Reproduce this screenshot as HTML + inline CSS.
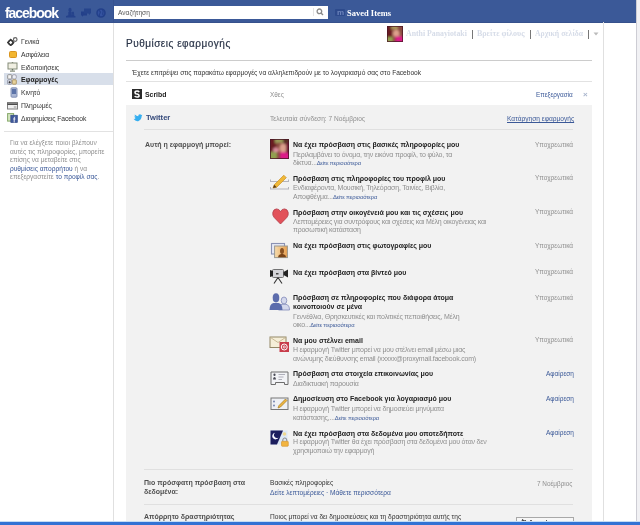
<!DOCTYPE html>
<html><head><meta charset="utf-8">
<style>
*{margin:0;padding:0;box-sizing:border-box}
html,body{width:640px;height:525px;overflow:hidden;background:#fff;font-family:"Liberation Sans",sans-serif;position:relative}
.a{position:absolute;white-space:nowrap;line-height:1;will-change:transform}
.hd{position:absolute;left:0;top:0;width:636px;height:23px;background:#3b5998;border-bottom:1px solid #36518c}
.logo{left:4.5px;top:6px;font-size:14px;font-weight:bold;color:#fff;letter-spacing:-1.05px}
.srch{position:absolute;left:114px;top:6px;width:214px;height:13px;background:#fff}
.d{color:#333}
.g{color:#8f8f8f}
.m{color:#505050}
.b{font-weight:bold}
.l{color:#3b5998}
.sm{font-size:5.85px}
.sep{position:absolute;height:1px;background:#e2e2e2}
svg{position:absolute}
</style></head><body>
<!-- header -->
<div class="hd"></div>
<div class="a logo">facebook</div>
<div class="srch"></div>
<div class="a" style="left:117.7px;top:9.6px;color:#555;font-size:6.6px">Αναζήτηση</div>
<div class="a" style="left:347px;top:9px;font-family:'Liberation Serif',serif;font-weight:bold;font-size:8.5px;color:#fff">Saved Items</div>

<!-- right strip -->
<div style="position:absolute;left:636px;top:0;width:4px;height:525px;background:#f1f1f4;border-left:1px solid #cdcdd4"></div>
<!-- column borders -->
<div style="position:absolute;left:113px;top:23px;width:1px;height:502px;background:#e0e0e0"></div><div style="position:absolute;left:113px;top:0;width:1px;height:23px;background:#36528f"></div>
<div style="position:absolute;left:603px;top:22px;width:1px;height:503px;background:#e0e0e0"></div>

<!-- sidebar -->
<div style="position:absolute;left:4px;top:73px;width:109px;height:12px;background:#d8dfea"></div>
<div class="sep" style="left:4px;top:131px;width:109px"></div>

<!-- title -->
<div class="sep" style="left:126px;top:60px;width:466px;background:#ccc"></div>
<div class="sep" style="left:126px;top:81px;width:466px"></div>

<!-- gray area -->
<div style="position:absolute;left:126px;top:105px;width:466px;height:420px;background:#f2f2f2"></div>
<div class="sep" style="left:144px;top:129px;width:429px;background:#e0e0e0"></div>
<div class="sep" style="left:144px;top:469px;width:429px;background:#e0e0e0"></div>
<div class="sep" style="left:144px;top:504px;width:429px;background:#e0e0e0"></div>


<!-- header icons -->
<svg style="left:65px;top:7px" width="11" height="11" viewBox="0 0 11 11">
 <g fill="#23408a" opacity="0.9">
 <ellipse cx="5" cy="3" rx="1.6" ry="2.2"/><path d="M3.3 5 H6.7 V9 H3.3Z"/>
 <ellipse cx="8" cy="6" rx="1.1" ry="1.5"/><path d="M6.8 7.2 H9.2 V9.5 H6.8Z"/>
 <path d="M1 9 Q3 8 5 8.3 Q8 8 10.5 9.2 V10.5 H1Z"/></g>
</svg>
<svg style="left:80px;top:8px" width="12" height="9" viewBox="0 0 12 9">
 <path d="M1 3.5 h6 v4 h-3.5 l-1.5 1.3 v-1.3 h-1z" fill="#23408a"/><path d="M4 0.5 h7 v5 h-1 v1.5 l-1.5 -1.5 h-4.5z" fill="#26448c"/>
</svg>
<svg style="left:96px;top:8px" width="10" height="10" viewBox="0 0 10 10">
 <circle cx="5" cy="5" r="4" stroke="#23408a" stroke-width="1.6" fill="#3452a0"/><path d="M3 2.5 Q5 3.5 4 5.2 Q2.8 6 3.6 8 M6.5 2 Q7.8 3.5 6.8 5 Q6.4 6.6 7.6 7.6" stroke="#23408a" stroke-width="1.1" fill="none"/>
</svg>
<div style="position:absolute;left:313px;top:8px;width:1px;height:8px;background:#e4e4e4"></div>
<svg style="left:316px;top:8px" width="8" height="8" viewBox="0 0 8 8">
 <circle cx="3.4" cy="3.3" r="2.3" stroke="#8a8a8a" stroke-width="1.3" fill="none"/><path d="M5 5 L7 7" stroke="#8a8a8a" stroke-width="1.5"/>
</svg>
<div style="position:absolute;left:335px;top:8.5px;width:10px;height:7.5px;background:#2d4a8c;border-radius:1px"></div>
<div class="a" style="left:336.5px;top:8.5px;font-size:8px;font-weight:bold;color:#6f86bd;font-family:'Liberation Sans',sans-serif">m</div>


<!-- profile links -->
<div class="a" style="left:406px;top:30px;font-family:'Liberation Serif',serif;font-weight:bold;font-size:7.8px;color:#d6dce8">Anthi Panayiotaki</div>
<div class="a" style="left:476.5px;top:30px;font-family:'Liberation Serif',serif;font-weight:bold;font-size:8.0px;color:#d6dce8">Βρείτε φίλους</div>
<div class="a" style="left:535px;top:30px;font-family:'Liberation Serif',serif;font-weight:bold;font-size:7.7px;color:#d6dce8">Αρχική σελίδα</div>
<div style="position:absolute;left:472px;top:30px;width:1px;height:9px;background:#777"></div>
<div style="position:absolute;left:530px;top:30px;width:1px;height:9px;background:#777"></div>
<div style="position:absolute;left:588px;top:30px;width:1px;height:9px;background:#777"></div>
<svg style="left:593px;top:32px" width="6" height="4" viewBox="0 0 6 4"><path d="M0.5 0.5 H5.5 L3 3.5Z" fill="#bbb"/></svg>

<!-- avatar -->
<svg style="left:387px;top:26px" width="16" height="16" viewBox="0 0 19 19">
 <defs><filter id="bl2" x="-20%" y="-20%" width="140%" height="140%"><feGaussianBlur stdDeviation="1.2"/></filter><clipPath id="cp2"><rect width="19" height="19"/></clipPath></defs>
 <g clip-path="url(#cp2)"><rect width="19" height="19" fill="#8a4a40"/>
 <g filter="url(#bl2)">
 <rect x="-2" y="-2" width="8" height="16" fill="#6a1e22"/>
 <rect x="5" y="-2" width="8" height="6" fill="#aa9a58"/>
 <ellipse cx="11" cy="9" rx="4" ry="4.5" fill="#dca08c"/>
 <rect x="-2" y="13" width="9" height="9" fill="#92a050"/>
 <rect x="10" y="12" width="11" height="9" fill="#dc1c88"/>
 </g></g>
 <rect x="0.5" y="0.5" width="18" height="18" fill="none" stroke="#4a1626" stroke-width="1.2" opacity="0.8"/>
</svg>

<!-- sidebar icons -->
<svg style="left:7px;top:37px" width="12" height="9" viewBox="0 0 12 9">
 <path d="M3.7 2.6 L6.6 5.5 L3.7 8.4 L0.8 5.5Z" fill="none" stroke="#3a3a3a" stroke-width="1.5"/>
 <circle cx="3.7" cy="5.5" r="2.3" fill="none" stroke="#3a3a3a" stroke-width="1.3"/>
 <circle cx="8.2" cy="2.5" r="1.8" fill="none" stroke="#666" stroke-width="1.2"/>
</svg>
<div style="position:absolute;left:8.5px;top:50.5px;width:8px;height:7.5px;background:#f2b630;border:1px solid #d99520;border-radius:1.5px"></div>
<svg style="left:7px;top:62px" width="11" height="10" viewBox="0 0 11 10">
 <rect x="1" y="1" width="9" height="6" fill="#f0efe2" stroke="#838b78" stroke-width="1"/>
 <rect x="4.8" y="0" width="1.4" height="1" fill="#838b78"/>
 <rect x="4.8" y="7" width="1.4" height="1.5" fill="#6a7460"/><rect x="3" y="8.6" width="5" height="1" fill="#6a7460"/>
</svg>
<svg style="left:7px;top:74px" width="10" height="11" viewBox="0 0 10 11">
 <rect x="0.7" y="0.7" width="4" height="4.3" rx="0.6" fill="#f4f4f4" stroke="#8a8a8a" stroke-width="0.9"/>
 <rect x="5.3" y="0.7" width="4" height="4.3" rx="1.5" fill="#eceef4" stroke="#9a9aa8" stroke-width="0.9"/>
 <rect x="0.7" y="5.8" width="4" height="4.4" rx="0.6" fill="#dde0ea" stroke="#8a8fa0" stroke-width="0.9"/>
 <path d="M2.7 7 L4 8.3 L2.7 9.6 L1.4 8.3Z" fill="#333"/>
 <rect x="5.3" y="5.8" width="4" height="4.4" rx="0.6" fill="#e6d29a" stroke="#a89060" stroke-width="0.9"/>
</svg>
<svg style="left:10px;top:87px" width="8" height="11" viewBox="0 0 8 11">
 <rect x="1" y="0.8" width="6" height="9.4" rx="1" fill="#aab6d4" stroke="#7c8ab0" stroke-width="0.9"/>
 <rect x="2" y="2" width="4" height="5" fill="#5c73a8"/>
</svg>
<svg style="left:7px;top:102px" width="11" height="8" viewBox="0 0 11 8">
 <rect x="0.5" y="0.5" width="10" height="6.5" fill="#f0f0f0" stroke="#7e7e7e" stroke-width="1"/>
 <rect x="0.5" y="1.4" width="10" height="1.5" fill="#3a3a3a"/>
 <rect x="6.8" y="4.4" width="2.6" height="1.2" fill="#a0a0a0"/>
</svg>
<svg style="left:7px;top:113px" width="11" height="10" viewBox="0 0 11 10">
 <rect x="0.6" y="0.6" width="6" height="7.5" fill="#d4e6c0" stroke="#86a86a" stroke-width="1"/>
 <rect x="3.8" y="2.2" width="6.6" height="7.4" fill="#40589a" stroke="#2d4480" stroke-width="0.6"/>
 <path d="M8.2 4 Q7.2 4 7.2 5 V9.5 M6.4 6 H8.4" stroke="#fff" stroke-width="0.9" fill="none"/>
</svg>

<!-- content icons -->
<svg style="left:132px;top:89px" width="10" height="10" viewBox="0 0 10 10">
 <rect width="10" height="10" fill="#2a2a2a"/>
 <path d="M7.2 3.2 Q6.6 2.1 5 2.1 Q3 2.1 3 3.7 Q3 5 5 5.1 Q7.1 5.3 7.1 6.7 Q7.1 8.1 5 8.1 Q3.3 8.1 2.7 7" stroke="#fff" stroke-width="1.5" fill="none"/>
</svg>
<svg style="left:133px;top:113.5px" width="9.5" height="8" viewBox="0 0 11 9">
 <path d="M0.5 5.5 Q2 6 3 4.5 Q1.5 4 1.5 2.5 Q2.5 3 3 2.8 Q1.5 1.5 2 0.5 Q4 2.5 6 2.5 Q6 0.3 8 0.3 Q9 0.3 9.6 1 L10.8 0.6 L10 1.8 L10.8 1.7 Q10.2 2.5 10 2.6 Q10 6.5 6 8.2 Q3 9 0.5 5.5Z" fill="#35aef0"/>
</svg>
<div class="a" style="left:583px;top:91px;font-size:8px;color:#a8b4cc;font-weight:bold">×</div>

<!-- permission icons -->
<svg style="left:270px;top:139px" width="19" height="20" viewBox="0 0 19 20">
 <defs><filter id="bl" x="-20%" y="-20%" width="140%" height="140%"><feGaussianBlur stdDeviation="1.1"/></filter><clipPath id="cp"><rect width="19" height="20"/></clipPath></defs>
 <g clip-path="url(#cp)"><rect width="19" height="20" fill="#8a4a40"/>
 <g filter="url(#bl)">
 <rect x="-2" y="-2" width="8" height="16" fill="#6a1e22"/>
 <rect x="5" y="-2" width="8" height="6" fill="#9a9a58"/>
 <rect x="13" y="-2" width="8" height="8" fill="#5a3028"/>
 <ellipse cx="13" cy="9" rx="3.5" ry="4.5" fill="#dca08c"/>
 <ellipse cx="6" cy="11" rx="3" ry="2.5" fill="#d88c9c"/>
 <rect x="-2" y="13" width="9" height="9" fill="#92a050"/>
 <rect x="10" y="13" width="11" height="9" fill="#dc1c88"/>
 <rect x="16" y="4" width="5" height="10" fill="#7a1838"/>
 </g></g>
 <rect x="0.5" y="0.5" width="18" height="19" fill="none" stroke="#4a1626" stroke-width="1" opacity="0.8"/>
</svg>
<svg style="left:269px;top:174px" width="21" height="17" viewBox="0 0 21 17">
 <path d="M1 7.5 H20 M1 15 H20" stroke="#b4b4bc" stroke-width="1"/>
 <path d="M1.5 5.5 V7.5 M19.5 5.5 V7.5 M1.5 13 V15 M19.5 13 V15" stroke="#b4b4bc" stroke-width="1"/>
 <path d="M4 14 L5.2 10.8 L14.8 1.2 L17.3 3.7 L7.7 13.3Z" fill="#f0b838" stroke="#c89028" stroke-width="0.7"/>
 <path d="M4 14 L5.2 10.8 L7.7 13.3Z" fill="#5a3a1a"/>
</svg>
<svg style="left:272px;top:208px" width="17" height="17" viewBox="0 0 17 17">
 <path d="M8.5 16 L2.2 9.5 Q0.3 7.3 0.8 4.5 Q1.5 1 4.5 0.9 Q7.2 0.9 8.5 3.6 Q9.8 0.9 12.5 0.9 Q15.5 1 16.2 4.5 Q16.7 7.3 14.8 9.5Z" fill="#e2525a" stroke="#b23a46" stroke-width="0.8"/>
</svg>
<svg style="left:270px;top:242px" width="19" height="17" viewBox="0 0 19 17">
 <defs><linearGradient id="ph" x1="0" y1="0" x2="1" y2="0"><stop offset="0" stop-color="#f6dcae"/><stop offset="1" stop-color="#e8a050"/></linearGradient></defs>
 <rect x="1.5" y="1.5" width="13" height="10.5" fill="#e6e9f5" stroke="#8a92b4" stroke-width="1.1"/>
 <rect x="4.6" y="4" width="12.8" height="11.6" fill="url(#ph)" stroke="#9a9890" stroke-width="1"/>
 <ellipse cx="12" cy="9" rx="2" ry="3" fill="#8a5222"/>
 <path d="M8 15.2 Q8.5 12 12 11.8 Q15.5 12 16.2 15.2Z" fill="#7a4418"/>
</svg>
<svg style="left:269px;top:268px" width="20" height="16" viewBox="0 0 20 16">
 <rect x="3.5" y="1.5" width="11" height="8" rx="1" fill="#d4d4d8" stroke="#666" stroke-width="0.9"/>
 <path d="M1 2 L4 3 V8 L1 9Z" fill="#222"/>
 <path d="M14.5 4 L19 1.5 V9.5 L14.5 7Z" fill="#222"/>
 <rect x="7" y="5" width="2.5" height="1.5" fill="#444"/>
 <path d="M9 9.5 L5 15.5 M9 9.5 L13 15.5 M9 9.5 V11" stroke="#333" stroke-width="1.1"/>
</svg>
<svg style="left:269px;top:292px" width="21" height="19" viewBox="0 0 21 19">
 <ellipse cx="15" cy="8.5" rx="2.8" ry="3.5" fill="#d4d8ec" stroke="#8c94c0" stroke-width="0.9"/>
 <path d="M9.5 18 Q9.5 13 13 12.3 H17 Q20.5 13 20.5 18Z" fill="#d4d8ec" stroke="#8c94c0" stroke-width="0.9"/>
 <ellipse cx="7" cy="5.8" rx="3.3" ry="4.6" fill="#5c6cac"/>
 <path d="M0.5 18 Q0.5 12 4.5 11 H9.5 Q13.5 12 13.5 18Z" fill="#5c6cac"/>
</svg>
<svg style="left:269px;top:336px" width="21" height="17" viewBox="0 0 21 17">
 <rect x="1" y="1" width="16" height="10.5" fill="#f5eed8" stroke="#948866" stroke-width="1"/>
 <path d="M1.5 1.5 L9 6.5 L16.5 1.5" stroke="#c4b48e" stroke-width="0.9" fill="none"/>
 <rect x="10.5" y="6" width="9.5" height="10" fill="#c83c4a"/>
 <circle cx="15.25" cy="11" r="3" stroke="#fff" stroke-width="1" fill="none"/><circle cx="15.25" cy="11" r="1.1" stroke="#fff" stroke-width="0.8" fill="none"/>
</svg>
<svg style="left:270px;top:371px" width="19" height="15" viewBox="0 0 19 15">
 <path d="M1 1 H18 V13.5 H14.5 V11.5 H5.5 V13.5 H1Z" fill="#f2f3f6" stroke="#6e6e6e" stroke-width="1"/>
 <ellipse cx="4.5" cy="3.8" rx="1.1" ry="1.3" fill="#4a4a55"/>
 <path d="M3 8.5 Q3 6 4.5 6 Q6 6 6 8.5Z" fill="#4a4a55"/>
 <path d="M8.5 3.5 H15 M8.5 6 H13.5 M8.5 8.5 H12" stroke="#a8a8b4" stroke-width="0.9"/>
</svg>
<svg style="left:270px;top:397px" width="19" height="14" viewBox="0 0 19 14">
 <rect x="1" y="1" width="17" height="11.5" fill="#eef0f4" stroke="#777" stroke-width="1"/>
 <circle cx="4" cy="4.5" r="0.9" fill="#6a7aa8"/><circle cx="4" cy="8.5" r="0.9" fill="#6a7aa8"/>
 <path d="M8 11 L9 8.5 L15.5 2 L17 3.5 L10.5 10Z" fill="#f0b640" stroke="#a07820" stroke-width="0.7"/>
</svg>
<svg style="left:270px;top:430px" width="19" height="17" viewBox="0 0 19 17">
 <rect x="0.5" y="0.5" width="17" height="14" fill="#dce8f6"/>
 <path d="M0.5 0.5 H13 L7 14.5 H0.5Z" fill="#1c1e5e"/>
 <circle cx="14.5" cy="4" r="1.8" fill="#f0d890"/>
 <path d="M5.2 2.8 A3.3 3.3 0 1 0 8.6 7.4 A2.7 2.7 0 1 1 5.2 2.8Z" fill="#f4f4ff"/>
 <path d="M12.8 11.5 V10 A2 2 0 0 1 16.8 10 V11.5" stroke="#8a8a8a" stroke-width="1" fill="none"/>
 <rect x="11.5" y="11.3" width="6.8" height="5" rx="0.8" fill="#f2b440" stroke="#d09028" stroke-width="0.6"/>
</svg>

<!-- bottom button -->
<div style="position:absolute;left:516px;top:517px;width:58px;height:8px;background:#f7f7f7;border:1px solid #a8a8a8;border-bottom:none"></div>
<svg style="left:520px;top:519px" width="8" height="4" viewBox="0 0 8 4"><path d="M1.5 4 L2.5 0.8 L4 2 L6 1.5" stroke="#444" stroke-width="1.1" fill="none"/></svg>
<div style="position:absolute;left:530px;top:520px;width:2px;height:2px;background:#666"></div>
<div style="position:absolute;left:546px;top:519.5px;width:1px;height:2.5px;background:#555"></div>

<div class="a d" style="left:21px;top:39.0px;font-size:6.8px;letter-spacing:-0.1px">Γενικά</div>
<div class="a d" style="left:21px;top:51.8px;font-size:6.8px;letter-spacing:-0.1px">Ασφάλεια</div>
<div class="a d" style="left:21px;top:64.6px;font-size:6.8px;letter-spacing:-0.1px">Ειδοποιήσεις</div>
<div class="a d b" style="left:21px;top:77.3px;font-size:6.9px;color:#222">Εφαρμογές</div>
<div class="a d" style="left:21px;top:90.2px;font-size:6.8px;letter-spacing:-0.1px">Κινητό</div>
<div class="a d" style="left:21px;top:103.0px;font-size:6.8px;letter-spacing:-0.1px">Πληρωμές</div>
<div class="a d" style="left:21px;top:115.8px;font-size:6.8px;letter-spacing:-0.1px">Διαφημίσεις Facebook</div>
<div class="a g" style="left:10px;top:140.4px;font-size:6.6px;">Για να ελέγξετε ποιοι βλέπουν</div>
<div class="a g" style="left:10px;top:148.9px;font-size:6.6px;">αυτές τις πληροφορίες, μπορείτε</div>
<div class="a g" style="left:10px;top:157.1px;font-size:6.6px;">επίσης να μεταβείτε στις</div>
<div class="a g" style="left:10px;top:165.6px;font-size:6.6px;"><span class="l">ρυθμίσεις απορρήτου</span> ή να</div>
<div class="a g" style="left:10px;top:174.2px;font-size:6.6px;">επεξεργαστείτε <span class="l">το προφίλ σας</span>.</div>
<div class="a" style="left:125.5px;top:39.1px;font-size:10px;letter-spacing:0.5px;color:#2a3448;-webkit-text-stroke:0.2px #2a3448">Ρυθμίσεις εφαρμογής</div>
<div class="a d" style="left:132px;top:69.6px;font-size:6.6px;">Έχετε επιτρέψει στις παρακάτω εφαρμογές να αλληλεπιδρούν με το λογαριασμό σας στο Facebook</div>
<div class="a d b" style="left:145px;top:92.2px;font-size:6.9px;color:#222">Scribd</div>
<div class="a g" style="left:270px;top:92.3px;font-size:6.4px;">Χθες</div>
<div class="a l" style="right:66.70000000000005px;top:92.4px;font-size:6.4px;">Επεξεργασία</div>
<div class="a l b" style="left:145.5px;top:114.2px;font-size:7.6px;color:#34497a">Twitter</div>
<div class="a g" style="left:270px;top:116.2px;font-size:6.6px;">Τελευταία σύνδεση: 7 Νοέμβριος</div>
<div class="a l" style="right:66px;top:116.4px;font-size:6.6px;"><u>Κατάργηση εφαρμογής</u></div>
<div class="a m b" style="left:144.5px;top:141.0px;font-size:7.0px;">Αυτή η εφαρμογή μπορεί:</div>
<div class="a d b" style="left:293px;top:141.4px;font-size:7.0px;color:#222">Να έχει πρόσβαση στις βασικές πληροφορίες μου</div>
<div class="a g" style="left:293px;top:150.6px;font-size:7.0px;letter-spacing:-0.2px">Περιλαμβάνει το όνομα, την εικόνα προφίλ, το φύλο, τα</div>
<div class="a g" style="left:293px;top:159.4px;font-size:7.0px;letter-spacing:-0.2px">δίκτυα...<span class="sm l">Δείτε περισσότερα</span></div>
<div class="a g" style="right:66.5px;top:141.7px;font-size:6.5px;">Υποχρεωτικά</div>
<div class="a d b" style="left:293px;top:175.1px;font-size:7.0px;color:#222">Πρόσβαση στις πληροφορίες του προφίλ μου</div>
<div class="a g" style="left:293px;top:184.4px;font-size:7.0px;letter-spacing:-0.2px">Ενδιαφέροντα, Μουσική, Τηλεόραση, Ταινίες, Βιβλία,</div>
<div class="a g" style="left:293px;top:192.5px;font-size:7.0px;letter-spacing:-0.2px">Αποφθέγμα...<span class="sm l">Δείτε περισσότερα</span></div>
<div class="a g" style="right:66.5px;top:175.4px;font-size:6.5px;">Υποχρεωτικά</div>
<div class="a d b" style="left:293px;top:208.8px;font-size:7.0px;color:#222">Πρόσβαση στην οικογένειά μου και τις σχέσεις μου</div>
<div class="a g" style="left:293px;top:217.5px;font-size:7.0px;letter-spacing:-0.2px">Λεπτομέρειες για συντρόφους και σχέσεις και Μέλη οικογένειας και</div>
<div class="a g" style="left:293px;top:226.4px;font-size:7.0px;letter-spacing:-0.2px">προσωπική κατάσταση</div>
<div class="a g" style="right:66.5px;top:209.1px;font-size:6.5px;">Υποχρεωτικά</div>
<div class="a d b" style="left:293px;top:242.3px;font-size:7.0px;color:#222">Να έχει πρόσβαση στις φωτογραφίες μου</div>
<div class="a g" style="right:66.5px;top:242.6px;font-size:6.5px;">Υποχρεωτικά</div>
<div class="a d b" style="left:293px;top:268.6px;font-size:7.0px;color:#222">Να έχει πρόσβαση στα βίντεό μου</div>
<div class="a g" style="right:66.5px;top:268.9px;font-size:6.5px;">Υποχρεωτικά</div>
<div class="a d b" style="left:293px;top:294.4px;font-size:7.0px;color:#222">Πρόσβαση σε πληροφορίες που διάφορα άτομα</div>
<div class="a d b" style="left:293px;top:302.9px;font-size:7.0px;color:#222">κοινοποιούν σε μένα</div>
<div class="a g" style="left:293px;top:312.9px;font-size:7.0px;letter-spacing:-0.2px">Γεννέθλια, Θρησκευτικές και πολιτικές πεποιθήσεις, Μέλη</div>
<div class="a g" style="left:293px;top:321.3px;font-size:7.0px;letter-spacing:-0.2px">οικο...<span class="sm l">Δείτε περισσότερα</span></div>
<div class="a g" style="right:66.5px;top:294.7px;font-size:6.5px;">Υποχρεωτικά</div>
<div class="a d b" style="left:293px;top:336.7px;font-size:7.0px;color:#222">Να μου στέλνει email</div>
<div class="a g" style="left:293px;top:345.9px;font-size:7.0px;letter-spacing:-0.2px">Η εφαρμογή Twitter μπορεί να μου στέλνει email μέσω μιας</div>
<div class="a g" style="left:293px;top:355.0px;font-size:7.0px;letter-spacing:-0.2px">ανώνυμης διεύθυνσης email (xxxxx@proxymail.facebook.com)</div>
<div class="a g" style="right:66.5px;top:337.0px;font-size:6.5px;">Υποχρεωτικά</div>
<div class="a d b" style="left:293px;top:370.2px;font-size:7.0px;color:#222">Πρόσβαση στα στοιχεία επικοινωνίας μου</div>
<div class="a g" style="left:293px;top:379.8px;font-size:7.0px;letter-spacing:-0.2px">Διαδικτυακή παρουσία</div>
<div class="a g" style="right:66.5px;top:370.5px;font-size:6.5px;"><span class="l">Αφαίρεση</span></div>
<div class="a d b" style="left:293px;top:395.4px;font-size:7.0px;color:#222">Δημοσίευση στο Facebook για λογαριασμό μου</div>
<div class="a g" style="left:293px;top:404.8px;font-size:7.0px;letter-spacing:-0.2px">Η εφαρμογή Twitter μπορεί να δημοσιεύει μηνύματα</div>
<div class="a g" style="left:293px;top:414.1px;font-size:7.0px;letter-spacing:-0.2px">κατάστασης,...<span class="sm l">Δείτε περισσότερα</span></div>
<div class="a g" style="right:66.5px;top:395.7px;font-size:6.5px;"><span class="l">Αφαίρεση</span></div>
<div class="a d b" style="left:293px;top:429.7px;font-size:7.0px;color:#222">Να έχει πρόσβαση στα δεδομένα μου οποτεδήποτε</div>
<div class="a g" style="left:293px;top:438.3px;font-size:7.0px;letter-spacing:-0.2px">Η εφαρμογή Twitter θα έχει πρόσβαση στα δεδομένα μου όταν δεν</div>
<div class="a g" style="left:293px;top:447.2px;font-size:7.0px;letter-spacing:-0.2px">χρησιμοποιώ την εφαρμογή</div>
<div class="a g" style="right:66.5px;top:430.0px;font-size:6.5px;"><span class="l">Αφαίρεση</span></div>
<div class="a m b" style="left:144.3px;top:479.4px;font-size:7.0px;">Πιο πρόσφατη πρόσβαση στα</div>
<div class="a m b" style="left:144.3px;top:487.8px;font-size:7.0px;">δεδομένα:</div>
<div class="a d" style="left:269.5px;top:480.2px;font-size:6.6px;">Βασικές πληροφορίες</div>
<div class="a l" style="left:269.5px;top:490.1px;font-size:6.6px;">Δείτε λεπτομέρειες · Μάθετε περισσότερα</div>
<div class="a g" style="right:67.5px;top:481.1px;font-size:6.4px;">7 Νοέμβριος</div>
<div class="a m b" style="left:144.3px;top:513.4px;font-size:7.0px;">Απόρρητο δραστηριότητας</div>
<div class="a d" style="left:269.5px;top:514.4px;font-size:6.6px;">Ποιος μπορεί να δει δημοσιεύσεις και τη δραστηριότητα αυτής της</div>

<!-- bottom bar -->
<div style="position:absolute;left:0;top:521px;width:640px;height:1px;background:#c4dcf4"></div><div style="position:absolute;left:0;top:522px;width:640px;height:3px;background:#3272d4"></div>
</body></html>
